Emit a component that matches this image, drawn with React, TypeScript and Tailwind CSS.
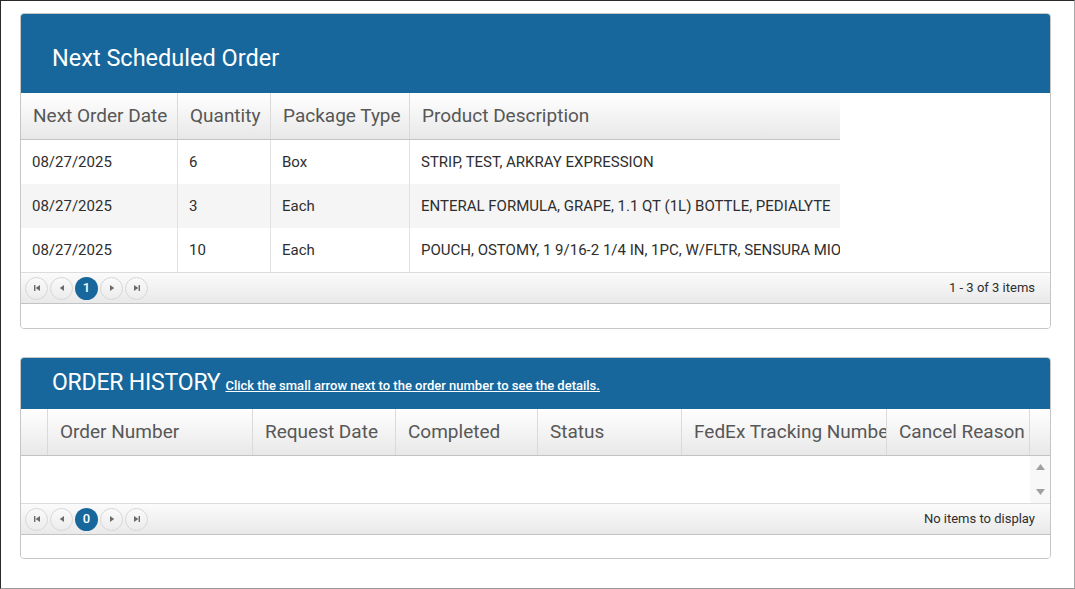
import React from 'react';

const BLUE = 'bg-[#17679c]';

const nextColumns = [
  { label: 'Next Order Date', w: 'w-[157px]' },
  { label: 'Quantity', w: 'w-[93px]' },
  { label: 'Package Type', w: 'w-[139px]' },
  { label: 'Product Description', w: 'w-[430px]' },
];

const nextRows = [
  ['08/27/2025', '6', 'Box', 'STRIP, TEST, ARKRAY EXPRESSION'],
  ['08/27/2025', '3', 'Each', 'ENTERAL FORMULA, GRAPE, 1.1 QT (1L) BOTTLE, PEDIALYTE'],
  ['08/27/2025', '10', 'Each', 'POUCH, OSTOMY, 1 9/16-2 1/4 IN, 1PC, W/FLTR, SENSURA MIO'],
];

const historyColumns = [
  { label: '', w: 'w-[27px]' },
  { label: 'Order Number', w: 'w-[205px]' },
  { label: 'Request Date', w: 'w-[143px]' },
  { label: 'Completed', w: 'w-[142px]' },
  { label: 'Status', w: 'w-[144px]' },
  { label: 'FedEx Tracking Number', w: 'w-[205px]' },
  { label: 'Cancel Reason', w: 'w-[143px]' },
];

function PagerButton({ children }: { children: React.ReactNode }) {
  return (
    <div className="w-[23px] h-[23px] rounded-full border border-[#d6d6d6] bg-gradient-to-b from-[#fafafa] to-[#ececec] flex items-center justify-center text-[#6b6b6b]">
      {children}
    </div>
  );
}

function FirstIcon() {
  return (
    <svg width="8" height="8" viewBox="0 0 8 8">
      <rect x="1" y="1" width="1.4" height="6" fill="currentColor" />
      <path d="M7 1 L2.6 4 L7 7 Z" fill="currentColor" />
    </svg>
  );
}

function PrevIcon() {
  return (
    <svg width="8" height="8" viewBox="0 0 8 8">
      <path d="M6 1 L1.8 4 L6 7 Z" fill="currentColor" />
    </svg>
  );
}

function NextIcon() {
  return (
    <svg width="8" height="8" viewBox="0 0 8 8">
      <path d="M2 1 L6.2 4 L2 7 Z" fill="currentColor" />
    </svg>
  );
}

function LastIcon() {
  return (
    <svg width="8" height="8" viewBox="0 0 8 8">
      <path d="M1 1 L5.4 4 L1 7 Z" fill="currentColor" />
      <rect x="5.6" y="1" width="1.4" height="6" fill="currentColor" />
    </svg>
  );
}

function Pager({ page, info }: { page: string; info: string }) {
  return (
    <div className="h-[32px] flex items-center justify-between pl-[4px] pr-[15px] border-t border-[#dcdcdc] border-b border-b-[#c3c3c3] bg-gradient-to-b from-[#fbfbfb] to-[#e9e9e9]">
      <div className="flex items-center gap-[2px]">
        <PagerButton>
          <FirstIcon />
        </PagerButton>
        <PagerButton>
          <PrevIcon />
        </PagerButton>
        <div className={`w-[23px] h-[23px] rounded-full ${BLUE} text-white text-[13px] font-medium flex items-center justify-center`}>
          {page}
        </div>
        <PagerButton>
          <NextIcon />
        </PagerButton>
        <PagerButton>
          <LastIcon />
        </PagerButton>
      </div>
      <span className="text-[13px] text-[#2e2e2e]">{info}</span>
    </div>
  );
}

export default function App() {
  return (
    <div
      className="w-[1075px] h-[589px] border-t border-l border-[#2a2a2a] border-r border-r-[#a8a8a8] border-b border-b-[#9a9a9a] bg-white pt-[12px] pl-[19px] pr-[23px]"
      style={{ fontFamily: 'Roboto, "Liberation Sans", sans-serif' }}
    >
      {/* Next scheduled order */}
      <div className="border border-[#c6c6c6] rounded-[4px] overflow-hidden">
        <div className={`${BLUE} h-[79px] flex items-center pl-[31px]`}>
          <h2 className="text-[23.5px] text-white font-normal pt-[11px]">Next Scheduled Order</h2>
        </div>

        <div className="w-[819px]">
          <div className="flex h-[47px] border-b border-[#c3c3c3] bg-gradient-to-b from-[#ffffff] to-[#e8e8e8]">
            {nextColumns.map((col, i) => (
              <div
                key={i}
                className={`${col.w} flex items-center pl-[12px] text-[19px] text-[#575757] whitespace-nowrap ${i < 3 ? 'border-r border-[#dadada]' : ''}`}
              >
                {col.label}
              </div>
            ))}
          </div>
          {nextRows.map((row, r) => (
            <div key={r} className={`flex h-[44px] ${r === 1 ? 'bg-[#f5f5f5]' : 'bg-white'}`}>
              {row.map((cell, i) => (
                <div
                  key={i}
                  className={`${nextColumns[i].w} flex items-center pl-[11px] text-[15px] text-[#2e2e2e] whitespace-nowrap overflow-hidden ${i < 3 ? 'border-r border-[#e2e2e2]' : ''}`}
                >
                  {cell}
                </div>
              ))}
            </div>
          ))}
        </div>

        <Pager page="1" info="1 - 3 of 3 items" />
        <div className="h-[24px] bg-white" />
      </div>

      {/* Order history */}
      <div className="mt-[28px] border border-[#c6c6c6] rounded-[4px] overflow-hidden">
        <div className={`${BLUE} h-[51px] flex items-center pl-[31px] gap-[5px]`}>
          <h2 className="text-[23px] text-white font-normal tracking-[-0.2px]">ORDER HISTORY</h2>
          <a href="#" className="text-[13px] text-white font-medium underline pt-[5px]">
            Click the small arrow next to the order number to see the details.
          </a>
        </div>

        <div className="flex h-[47px] border-b border-[#c3c3c3] bg-gradient-to-b from-[#ffffff] to-[#e8e8e8]">
          {historyColumns.map((col, i) => (
            <div
              key={i}
              className={`${col.w} shrink-0 flex items-center pl-[12px] text-[19px] text-[#575757] whitespace-nowrap overflow-hidden border-r border-[#dadada]`}
            >
              {col.label}
            </div>
          ))}
          <div className="flex-1" />
        </div>

        <div className="flex h-[47px] bg-white">
          <div className="flex-1" />
          <div className="w-[20px] bg-[#f8f8f8] flex flex-col items-center justify-between py-[7px]">
            <svg width="11" height="8" viewBox="0 0 11 8">
              <path d="M5.5 1 L10 7 L1 7 Z" fill="#a0a0a0" />
            </svg>
            <svg width="11" height="8" viewBox="0 0 11 8">
              <path d="M1 1 L10 1 L5.5 7 Z" fill="#a0a0a0" />
            </svg>
          </div>
        </div>

        <Pager page="0" info="No items to display" />
        <div className="h-[23px] bg-white" />
      </div>
    </div>
  );
}
